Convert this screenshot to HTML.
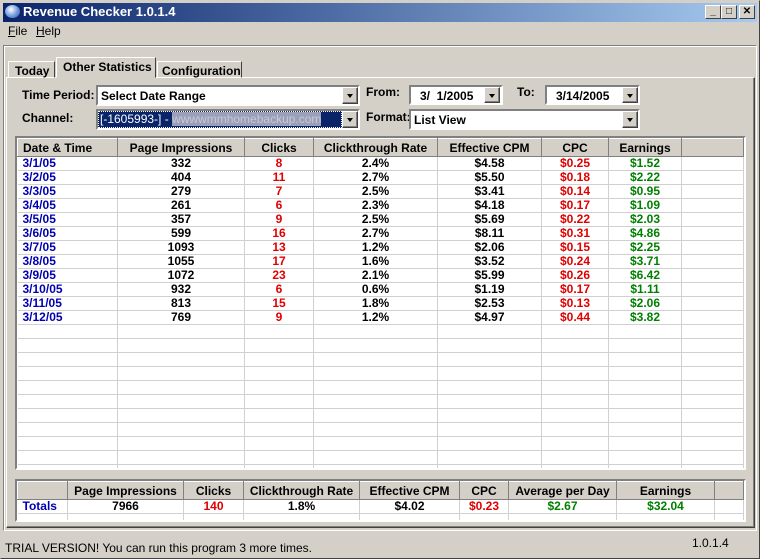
<!DOCTYPE html>
<html><head><style>
*{margin:0;padding:0;box-sizing:border-box}
body{width:760px;height:559px;background:#d4d0c8;font-family:"Liberation Sans",sans-serif;font-size:12px;position:relative;overflow:hidden}
.a{position:absolute}
.b{font-weight:bold}
.sunk{border:2px solid;border-color:#808080 #fff #fff #808080;background:#fff}
.btn{position:absolute;width:16px;background:#d4d0c8;border:1px solid;border-color:#fff #404040 #404040 #fff;box-shadow:inset -1px -1px #808080}
.btn:after{content:"";position:absolute;left:4px;top:6px;border-left:3.5px solid transparent;border-right:3.5px solid transparent;border-top:4px solid #000}
table{border-collapse:collapse;table-layout:fixed;font-weight:bold;font-size:12px}
td{height:14px;border-right:1px solid #d0d0d0;border-bottom:1px solid #d0d0d0;text-align:center;padding:0;line-height:13px;white-space:nowrap;overflow:hidden}
td.l{text-align:left;padding-left:5px;color:#0000b0}
th{height:18px;background:#d4d0c8;border:1px solid;border-color:#fff #808080 #808080 #fff;font-weight:bold;font-size:12px;padding:0;white-space:nowrap}
.r{color:#e00000}.g{color:#008000}
.tb{position:absolute;width:16px;height:14px;background:#d4d0c8;border:1px solid;border-color:#fff #404040 #404040 #fff;font-size:10px;line-height:11px;text-align:center;font-weight:bold}
</style></head><body>
<div class="a" style="left:0;top:0;width:760px;height:559px;border:1px solid;border-color:#d4d0c8 #404040 #404040 #d4d0c8"></div>
<div class="a" style="left:3px;top:3px;width:754px;height:19px;background:linear-gradient(90deg,#0a246a,#a6caf0)"></div>
<div class="a" style="left:5px;top:5px;width:15px;height:13px;border-radius:50%;background:radial-gradient(circle at 40% 35%,#fff,#7aa0e0 50%,#3050a0)"></div>
<div class="a b" style="left:23px;top:4px;color:#fff;font-size:13px">Revenue Checker 1.0.1.4</div>
<div class="tb" style="left:705px;top:5px">_</div>
<div class="tb" style="left:721px;top:5px;font-weight:normal">□</div>
<div class="tb" style="left:739px;top:5px">✕</div>
<div class="a" style="left:8px;top:24px"><u>F</u>ile</div>
<div class="a" style="left:36px;top:24px"><u>H</u>elp</div>
<div class="a" style="left:3px;top:45px;width:754px;height:486px;border:1px solid;border-color:#808080 #fff #fff #808080;box-shadow:inset 1px 1px #fff"></div>
<!-- tab panel -->
<div class="a" style="left:6px;top:77px;width:749px;height:451px;border:1px solid;border-color:#fff #404040 #404040 #fff;box-shadow:inset -1px -1px #808080"></div>
<div class="a b" style="left:8px;top:61px;width:47px;height:17px;border:1px solid;border-color:#fff #404040 transparent #fff;padding:2px 0 0 6px;font-size:12px">Today</div>
<div class="a b" style="left:56px;top:57px;width:100px;height:21px;border:1px solid;border-color:#fff #404040 transparent #fff;background:#d4d0c8;padding:2px 0 0 6px;font-size:12px">Other Statistics</div>
<div class="a b" style="left:157px;top:61px;width:85px;height:17px;border:1px solid;border-color:#fff #404040 transparent #fff;padding:2px 0 0 4px;font-size:12px">Configuration</div>
<div class="a b" style="left:22px;top:88px;font-size:12px">Time Period:</div>
<div class="a b" style="left:22px;top:111px;font-size:12px">Channel:</div>
<div class="a sunk" style="left:96px;top:85px;width:264px;height:21px"></div>
<div class="a b" style="left:101px;top:89px;font-size:12px">Select Date Range</div>
<div class="btn" style="left:342px;top:87px;height:17px"></div>
<div class="a sunk" style="left:96px;top:109px;width:264px;height:21px"></div>
<div class="a" style="left:98px;top:111px;width:244px;height:17px;background:#0a246a;outline:1px dotted #fff;outline-offset:-1px"></div>
<div class="a" style="left:100px;top:112px;color:#fff;font-size:12px">[-1605993-] - <span style="background:#9aa0b8;color:#c8c8d8">wwwwmmhomebackup.com</span></div>
<div class="btn" style="left:342px;top:111px;height:17px"></div>
<div class="a b" style="left:366px;top:85px;font-size:12px">From:</div>
<div class="a b" style="left:366px;top:110px;font-size:12px">Format:</div>
<div class="a sunk" style="left:409px;top:85px;width:94px;height:20px"></div>
<div class="a b" style="left:420px;top:89px;font-size:12px">3/&nbsp; 1/2005</div>
<div class="btn" style="left:484px;top:87px;height:16px"></div>
<div class="a b" style="left:517px;top:85px;font-size:12px">To:</div>
<div class="a sunk" style="left:545px;top:85px;width:95px;height:20px"></div>
<div class="a b" style="left:556px;top:89px;font-size:12px">3/14/2005</div>
<div class="btn" style="left:622px;top:87px;height:16px"></div>
<div class="a sunk" style="left:409px;top:109px;width:231px;height:21px"></div>
<div class="a b" style="left:414px;top:113px;font-size:12px">List View</div>
<div class="btn" style="left:622px;top:111px;height:17px"></div>
<!-- main list -->
<div class="a sunk" style="left:15px;top:136px;width:731px;height:334px;overflow:hidden">
<table style="width:727px">
<colgroup><col style="width:100px"><col style="width:127px"><col style="width:69px"><col style="width:124px"><col style="width:104px"><col style="width:67px"><col style="width:73px"><col></colgroup>
<tr><th style="text-align:left;padding-left:5px">Date &amp; Time</th><th>Page Impressions</th><th>Clicks</th><th>Clickthrough Rate</th><th>Effective CPM</th><th>CPC</th><th>Earnings</th><th></th></tr>
<tr><td class="l">3/1/05</td><td>332</td><td class="r">8</td><td>2.4%</td><td>$4.58</td><td class="r">$0.25</td><td class="g">$1.52</td><td></td></tr>
<tr><td class="l">3/2/05</td><td>404</td><td class="r">11</td><td>2.7%</td><td>$5.50</td><td class="r">$0.18</td><td class="g">$2.22</td><td></td></tr>
<tr><td class="l">3/3/05</td><td>279</td><td class="r">7</td><td>2.5%</td><td>$3.41</td><td class="r">$0.14</td><td class="g">$0.95</td><td></td></tr>
<tr><td class="l">3/4/05</td><td>261</td><td class="r">6</td><td>2.3%</td><td>$4.18</td><td class="r">$0.17</td><td class="g">$1.09</td><td></td></tr>
<tr><td class="l">3/5/05</td><td>357</td><td class="r">9</td><td>2.5%</td><td>$5.69</td><td class="r">$0.22</td><td class="g">$2.03</td><td></td></tr>
<tr><td class="l">3/6/05</td><td>599</td><td class="r">16</td><td>2.7%</td><td>$8.11</td><td class="r">$0.31</td><td class="g">$4.86</td><td></td></tr>
<tr><td class="l">3/7/05</td><td>1093</td><td class="r">13</td><td>1.2%</td><td>$2.06</td><td class="r">$0.15</td><td class="g">$2.25</td><td></td></tr>
<tr><td class="l">3/8/05</td><td>1055</td><td class="r">17</td><td>1.6%</td><td>$3.52</td><td class="r">$0.24</td><td class="g">$3.71</td><td></td></tr>
<tr><td class="l">3/9/05</td><td>1072</td><td class="r">23</td><td>2.1%</td><td>$5.99</td><td class="r">$0.26</td><td class="g">$6.42</td><td></td></tr>
<tr><td class="l">3/10/05</td><td>932</td><td class="r">6</td><td>0.6%</td><td>$1.19</td><td class="r">$0.17</td><td class="g">$1.11</td><td></td></tr>
<tr><td class="l">3/11/05</td><td>813</td><td class="r">15</td><td>1.8%</td><td>$2.53</td><td class="r">$0.13</td><td class="g">$2.06</td><td></td></tr>
<tr><td class="l">3/12/05</td><td>769</td><td class="r">9</td><td>1.2%</td><td>$4.97</td><td class="r">$0.44</td><td class="g">$3.82</td><td></td></tr>
<tr><td></td><td></td><td></td><td></td><td></td><td></td><td></td><td></td></tr>
<tr><td></td><td></td><td></td><td></td><td></td><td></td><td></td><td></td></tr>
<tr><td></td><td></td><td></td><td></td><td></td><td></td><td></td><td></td></tr>
<tr><td></td><td></td><td></td><td></td><td></td><td></td><td></td><td></td></tr>
<tr><td></td><td></td><td></td><td></td><td></td><td></td><td></td><td></td></tr>
<tr><td></td><td></td><td></td><td></td><td></td><td></td><td></td><td></td></tr>
<tr><td></td><td></td><td></td><td></td><td></td><td></td><td></td><td></td></tr>
<tr><td></td><td></td><td></td><td></td><td></td><td></td><td></td><td></td></tr>
<tr><td></td><td></td><td></td><td></td><td></td><td></td><td></td><td></td></tr>
<tr><td></td><td></td><td></td><td></td><td></td><td></td><td></td><td></td></tr>
<tr><td></td><td></td><td></td><td></td><td></td><td></td><td></td><td></td></tr>
</table></div>
<!-- totals -->
<div class="a sunk" style="left:15px;top:479px;width:731px;height:43px;overflow:hidden">
<table style="width:727px">
<colgroup><col style="width:50px"><col style="width:116px"><col style="width:60px"><col style="width:116px"><col style="width:100px"><col style="width:49px"><col style="width:108px"><col style="width:98px"><col></colgroup>
<tr><th style="height:17px"></th><th>Page Impressions</th><th>Clicks</th><th>Clickthrough Rate</th><th>Effective CPM</th><th>CPC</th><th>Average per Day</th><th>Earnings</th><th></th></tr>
<tr><td class="l">Totals</td><td>7966</td><td class="r">140</td><td>1.8%</td><td>$4.02</td><td class="r">$0.23</td><td class="g">$2.67</td><td class="g">$32.04</td><td></td></tr>
<tr><td></td><td></td><td></td><td></td><td></td><td></td><td></td><td></td><td></td></tr>
</table></div>
<!-- status -->
<div class="a" style="left:5px;top:541px;font-size:12px">TRIAL VERSION! You can run this program 3 more times.</div>
<div class="a" style="left:692px;top:536px;font-size:12px">1.0.1.4</div>
</body></html>
